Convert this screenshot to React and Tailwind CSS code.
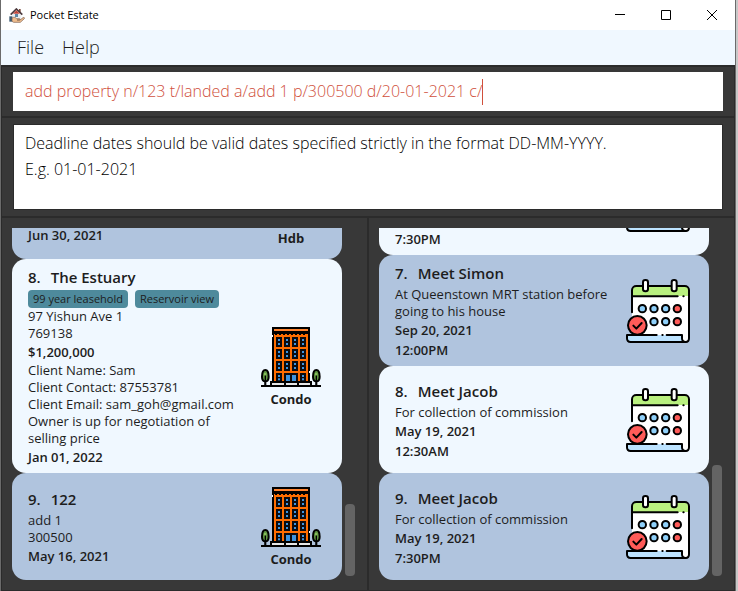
import React from "react";

const WINDOW_COLUMNS = [45, 69, 93, 117];
const WINDOW_ROWS = [30, 66, 102];

function HouseInHandIcon() {
  return (
    <svg viewBox="0 0 48 45" className="h-[15px] w-4" aria-hidden="true">
      <path d="M10 18h25v18H10z" fill="#e9edf0" />
      <path d="M30 3h5v10h-5z" fill="#7d4a3c" />
      <path d="M5 20 22 3l18 17" fill="none" stroke="#4c3a3e" strokeWidth="5" />
      <path d="M12 17 22 7l11 10z" fill="#c0453a" />
      <path d="M18 18h9v9h-9z" fill="#5c87a5" />
      <path d="M1 25h9v16H1z" fill="#3c5a72" />
      <path
        d="M9 30c6-4 10-2 14 2h8c3 0 3 3 0 4h-7 9l9-7c4-2 6 1 3 4L34 43H14l-5-3z"
        fill="#f0bd8d"
        stroke="#7a5a48"
        strokeWidth="2"
      />
    </svg>
  );
}

function Tree({ x }) {
  return (
    <g>
      <path d={`M${x} 140v36`} stroke="#000" strokeWidth="6" />
      <path
        d={`M${x} 129c7 0 10 9 10 20 0 9-4 14-10 14s-10-5-10-14c0-11 3-20 10-20z`}
        fill="#5f9440"
        stroke="#000"
        strokeWidth="6"
      />
      <path d={`M${x} 145v30`} stroke="#000" strokeWidth="4" />
      <path d={`M${x - 4} 138h7v7h-7z`} fill="#86bf5c" />
    </g>
  );
}

function CondoIcon() {
  return (
    <svg viewBox="0 0 180 180" className="size-[60px]" aria-hidden="true">
      <path d="M33 0h114v164H33z" fill="#000" />
      <path d="M39 6h102v6H39z" fill="#ff8430" />
      <path d="M39 18h102v146H39z" fill="#ff6d00" />
      <path d="M33 18h114" stroke="#000" strokeWidth="6" />
      <path d="M42 21h96" stroke="#000" strokeWidth="6" strokeDasharray="6 6" />
      <path d="M33 24h3v6h-3zM144 132h3v6h-3z" fill="#fff" />
      {WINDOW_ROWS.map((y) =>
        WINDOW_COLUMNS.map((x) => (
          <g key={`${x}-${y}`}>
            <path d={`M${x} ${y}h18v30H${x}z`} fill="#0b0b0f" />
            <path d={`M${x + 6} ${y + 6}h6v6h-6zM${x + 6} ${y + 18}h6v6h-6z`} fill="#3d95e0" />
          </g>
        )),
      )}
      <path d="M45 138h18v24H45zM117 138h18v24h-18zM69 138h42v24H69z" fill="#0b0b0f" />
      <path d="M51 144h6v6h-6zM51 154h6v6h-6zM123 144h6v6h-6zM123 154h6v6h-6z" fill="#3d95e0" />
      <path d="M75 144h12v18H75zM93 144h12v18H93z" fill="#3d95e0" />
      <path d="M27 162h126v15H27z" fill="#000" />
      <path d="M33 168h36v6H33zM75 168h33v6H75zM114 168h33v6h-33z" fill="#e6e6e6" />
      <Tree x={13} />
      <Tree x={166} />
      <path d="M0 177h180" stroke="#000" strokeWidth="6" />
    </svg>
  );
}

function CalendarIcon() {
  return (
    <svg viewBox="0 0 192 192" className="size-16" aria-hidden="true">
      <path d="M18 168V34c0-8 6-13 13-13h145c7 0 13 5 13 13v146c0 5-4 9-10 9z" fill="#fff" />
      <path d="M18 51V34c0-8 6-13 13-13h145c7 0 13 5 13 13v17z" fill="#b9f07f" />
      <path
        d="M18 100V34c0-8 6-13 13-13h145c7 0 13 5 13 13v144c0 6-4 11-10 11"
        fill="none"
        stroke="#000"
        strokeWidth="6"
        strokeLinecap="round"
      />
      <path d="M18 52h137M172 52h1" stroke="#000" strokeWidth="6" strokeLinecap="round" />
      <rect x="51" y="3" width="15" height="34" rx="7" fill="#fff" stroke="#000" strokeWidth="6" />
      <rect x="137" y="3" width="15" height="34" rx="7" fill="#fff" stroke="#000" strokeWidth="6" />
      <g stroke="#000" strokeWidth="6" fill="#8fd0fa">
        <circle cx="49" cy="89" r="11" />
        <circle cx="84" cy="89" r="11" />
        <circle cx="119" cy="89" r="11" />
        <circle cx="84" cy="128" r="11" />
        <circle cx="119" cy="128" r="11" />
        <circle cx="154" cy="89" r="11" fill="#ff5b58" />
        <circle cx="154" cy="128" r="11" fill="#ff5b58" />
      </g>
      <path d="M3 168h165v10c0 6 4 11 11 11H14c-7 0-11-5-11-11z" fill="#bde3ff" />
      <path
        d="M92 168H3v10c0 6 4 11 11 11h165c-7 0-11-5-11-11v-10h-46M109 168h1"
        fill="none"
        stroke="#000"
        strokeWidth="6"
        strokeLinecap="round"
        strokeLinejoin="round"
      />
      <circle cx="34" cy="139" r="28" fill="#ff5b58" stroke="#000" strokeWidth="6" />
      <path
        d="m22 140 9 9 16-17"
        fill="none"
        stroke="#000"
        strokeWidth="6"
        strokeLinecap="round"
        strokeLinejoin="round"
      />
    </svg>
  );
}

function toneClass(tone) {
  return tone === "light" ? "bg-[#f0f8ff]" : "bg-[#b0c4de]";
}

function Card({ tone, index, title, tags, lines, icon, caption }) {
  return (
    <li
      className={`flex min-h-[107px] shrink-0 items-center gap-3 rounded-[14px] px-4 pt-[7px] pb-[6px] ${toneClass(tone)}`}
    >
      <div className="min-w-0 flex-1 text-[13px] leading-[17px]">
        <h2 className="mb-[2px] flex gap-[10px] text-[15px] leading-[22px] font-semibold">
          <span>{index}.</span>
          <span>{title}</span>
        </h2>
        {tags && (
          <ul className="flex gap-[7px]">
            {tags.map((tag) => (
              <li key={tag} className="rounded bg-[#4e8a9c] px-[5px] text-[11px] leading-[18px]">
                {tag}
              </li>
            ))}
          </ul>
        )}
        {lines.map(({ text, strong }) => (
          <p key={text} className={strong ? "leading-5 font-semibold" : ""}>
            {text}
          </p>
        ))}
      </div>
      <div className={`flex w-[70px] flex-col items-center ${caption ? "pt-1" : ""}`}>
        {icon}
        {caption && <span className="text-[13px] leading-6 font-bold">{caption}</span>}
      </div>
    </li>
  );
}

const b = (text) => ({ text, strong: true });
const t = (text) => ({ text, strong: false });

const PROPERTIES = [
  {
    tone: "light",
    index: 8,
    title: "The Estuary",
    tags: ["99 year leasehold", "Reservoir view"],
    lines: [
      t("97 Yishun Ave 1"),
      t("769138"),
      b("$1,200,000"),
      t("Client Name: Sam"),
      t("Client Contact: 87553781"),
      t("Client Email: sam_goh@gmail.com"),
      t("Owner is up for negotiation of selling price"),
      b("Jan 01, 2022"),
    ],
    caption: "Condo",
  },
  {
    tone: "dark",
    index: 9,
    title: "122",
    lines: [t("add 1"), t("300500"), b("May 16, 2021")],
    caption: "Condo",
  },
];

const APPOINTMENTS = [
  {
    tone: "dark",
    index: 7,
    title: "Meet Simon",
    lines: [t("At Queenstown MRT station before going to his house"), b("Sep 20, 2021"), b("12:00PM")],
  },
  {
    tone: "light",
    index: 8,
    title: "Meet Jacob",
    lines: [t("For collection of commission"), b("May 19, 2021"), b("12:30AM")],
  },
  {
    tone: "dark",
    index: 9,
    title: "Meet Jacob",
    lines: [t("For collection of commission"), b("May 19, 2021"), b("7:30PM")],
  },
];

function ListPanel({ label, thumbClass, children }) {
  return (
    <section aria-label={label} className="flex min-h-0 min-w-0 flex-1 gap-[3px] py-[10px] pr-3 pl-[10px]">
      <ul className="flex min-w-0 flex-1 flex-col justify-end overflow-hidden">{children}</ul>
      <div className="flex w-[10px] flex-col justify-end pb-1">
        <div className={`rounded bg-[#646464] ${thumbClass}`} />
      </div>
    </section>
  );
}

export default function App() {
  return (
    <div className="flex h-screen bg-[#c8c8c8] font-['Open_Sans','Noto_Sans',sans-serif] text-[#1d1d1d]">
      <div className="mr-[2px] flex min-w-0 flex-1 flex-col border-x border-[#6b6b6b] bg-[#383838]">
        <header className="flex h-[30px] shrink-0 items-center bg-white pl-2 text-black">
          <HouseInHandIcon />
          <h1 className="ml-[5px] flex-1 text-[11px]">Pocket Estate</h1>
          <button type="button" aria-label="Minimize" className="flex h-full w-[46px] items-center justify-center">
            <svg viewBox="0 0 10 10" className="size-[10px]" shapeRendering="crispEdges">
              <path d="M0 4h10v1H0z" />
            </svg>
          </button>
          <button type="button" aria-label="Maximize" className="flex h-full w-[46px] items-center justify-center">
            <svg viewBox="0 0 10 10" className="size-[10px]" fill="none" stroke="#000">
              <path d="M.5.5h9v9h-9z" />
            </svg>
          </button>
          <button type="button" aria-label="Close" className="flex h-full w-[46px] items-center justify-center">
            <svg viewBox="0 0 10 10" className="size-[10px]" fill="none" stroke="#000">
              <path d="m0 0 10 10M10 0 0 10" />
            </svg>
          </button>
        </header>

        <nav className="flex h-[35px] shrink-0 items-center gap-[18px] bg-[#f0f8ff] px-4 text-[18px] font-light">
          <button type="button">File</button>
          <button type="button">Help</button>
        </nav>

        <div className="flex min-h-0 flex-1 flex-col border-x border-[#2b2b2b]">
          <div className="shrink-0 border-y-2 border-[#2b2b2b] px-[11px] py-[5px]">
            <div className="flex h-[39px] items-center bg-white pl-3">
              <input
                type="text"
                aria-label="Command"
                defaultValue="add property n/123 t/landed a/add 1 p/300500 d/20-01-2021 c/"
                className="h-[30px] [field-sizing:content] pb-[2px] text-[16px] font-light text-[#d0503c] outline-none"
              />
              <span className="h-[26px] w-px bg-[#d0503c]" />
            </div>
          </div>

          <div className="shrink-0 border-b-2 border-[#2b2b2b] px-[11px] py-[6px]">
            <textarea
              readOnly
              aria-label="Result"
              defaultValue={
                "Deadline dates should be valid dates specified strictly in the format DD-MM-YYYY.\nE.g. 01-01-2021"
              }
              className="block h-[86px] w-full resize-none border border-[#2b2b2b] bg-white px-[11px] py-[5px] text-[16px] leading-[26px] font-light text-black outline-none"
            />
          </div>

          <main className="flex min-h-0 flex-1 divide-x-2 divide-[#2b2b2b] border-b border-[#2b2b2b]">
            <ListPanel label="Properties" thumbClass="h-[72px]">
              <li
                className={`flex min-h-[107px] shrink-0 items-end gap-3 rounded-[14px] px-4 pb-[14px] text-[13px] leading-[14px] ${toneClass("dark")}`}
              >
                <p className="flex-1 pb-[3px] font-semibold">Jun 30, 2021</p>
                <span className="w-[70px] text-center font-bold">Hdb</span>
              </li>
              {PROPERTIES.map((property) => (
                <Card key={property.index} {...property} icon={<CondoIcon />} />
              ))}
            </ListPanel>
            <ListPanel label="Appointments" thumbClass="h-[111px]">
              <li
                className={`flex min-h-[107px] shrink-0 items-end gap-3 rounded-[14px] px-4 pb-[6px] text-[13px] leading-5 ${toneClass("light")}`}
              >
                <p className="flex-1 font-semibold">7:30PM</p>
                <div className="flex w-[70px] justify-center pb-[17px]">
                  <CalendarIcon />
                </div>
              </li>
              {APPOINTMENTS.map((appointment) => (
                <Card key={appointment.index} {...appointment} icon={<CalendarIcon />} />
              ))}
            </ListPanel>
          </main>
        </div>
      </div>
    </div>
  );
}
